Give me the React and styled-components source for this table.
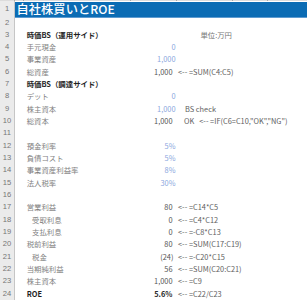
import React from "react";
import styled, { createGlobalStyle } from "styled-components";

const Global = createGlobalStyle`
  html, body { margin: 0; padding: 0; background: #fff; overflow: hidden; }
  body { font-family: "Noto Sans CJK JP", "Noto Sans", sans-serif; }
`;

const COLS = "15px 9px 107px 46px 56px 35px 1fr";
const ROW_H = 12.33;

const Sheet = styled.div`
  width: 307px;
  height: 300px;
  display: flex;
  flex-direction: column;
  overflow: hidden;
  font-size: 7.4px;
  color: #7f7f7f;
`;

const HeaderEdge = styled.div`
  display: grid;
  grid-template-columns: ${COLS};
  height: 1px;
  background: #dcdcdc;
`;

const EdgeCell = styled.div`
  border-right: 1px solid #a9a9a9;
  &:last-child { border-right: none; }
`;

const Row = styled.div`
  display: grid;
  grid-template-columns: ${COLS};
  height: ${(p) => p.$h}px;
  line-height: ${(p) => p.$h}px;
  white-space: nowrap;
`;

const RowHead = styled.div`
  background: #ebebeb;
  color: #767676;
  font-family: "Liberation Sans", sans-serif;
  font-size: 7.6px;
  text-align: center;
  border-right: 1px solid #c6c6c6;
  border-bottom: 1px solid #f7f7f7;
  box-sizing: border-box;
`;

const Title = styled.div`
  grid-column: 2 / -1;
  background: #0b6cb4;
  border-bottom: 1px solid #5e9bd0;
  margin-top: 0.7px;
  box-sizing: border-box;
  color: #fff;
  font-size: 12.2px;
  font-weight: 500;
  line-height: 14px;
  padding-left: 1.5px;
  letter-spacing: 0.1px;
`;

const Label = styled.div`
  grid-column: 3;
  padding-left: ${(p) => (p.$indent ? 8 : 2.7)}px;
  color: ${(p) => (p.$bold ? "#1f1f1f" : "#7f7f7f")};
  font-weight: ${(p) => (p.$bold ? 700 : 400)};
  overflow: visible;
`;

const Value = styled.div`
  grid-column: 4;
  text-align: right;
  padding-right: ${(p) => (p.$input ? 1.5 : 4.5)}px;
  color: ${(p) => (p.$input ? "#8ba7de" : "#555")};
  font-weight: ${(p) => (p.$bold ? 700 : 400)};
  ${(p) => (p.$bold ? "color: #2a2a2a;" : "")}
  ${(p) => (p.$paren ? "padding-right: 3.6px;" : "")}
`;

const Note = styled.div`
  grid-column: 5 / -1;
  padding-left: ${(p) => p.$pad ?? 1}px;
  color: #5e5e5e;
  word-spacing: ${(p) => p.$ws ?? 0}px;
`;

const Unit = styled.div`
  grid-column: 5;
  text-align: right;
  padding-right: 1px;
  color: #777;
`;

const rows = [
  {},
  { label: "時価BS（運用サイド）", bold: true, unit: "単位:万円" },
  { label: "手元現金", value: "0", input: true },
  { label: "事業資産", value: "1,000", input: true },
  { label: "総資産", value: "1,000", note: "<-- =SUM(C4:C5)" },
  { label: "時価BS（調達サイド）", bold: true },
  { label: "デット", value: "0", input: true },
  { label: "株主資本", value: "1,000", input: true, note: "BS check", pad: 8 },
  { label: "総資本", value: "1,000", note: "OK\u00a0\u00a0\u00a0<-- =IF(C6=C10,\"OK\",\"NG\")", pad: 7 },
  {},
  { label: "預金利率", value: "5%", input: true },
  { label: "負債コスト", value: "5%", input: true },
  { label: "事業資産利益率", value: "8%", input: true },
  { label: "法人税率", value: "30%", input: true },
  {},
  { label: "営業利益", value: "80", note: "<-- =C14*C5" },
  { label: "受取利息", indent: true, value: "0", note: "<-- =C4*C12" },
  { label: "支払利息", indent: true, value: "0", note: "<-- =-C8*C13" },
  { label: "税前利益", value: "80", note: "<-- =SUM(C17:C19)" },
  { label: "税金", indent: true, value: "(24)", paren: true, note: "<-- =-C20*C15" },
  { label: "当期純利益", value: "56", note: "<-- =SUM(C20:C21)" },
  { label: "株主資本", value: "1,000", note: "<-- =C9" },
  { label: "ROE", value: "5.6%", bold: true, note: "<-- =C22/C23" },
];

export default function App() {
  return (
    <>
      <Global />
      <Sheet>
        <HeaderEdge>
          {Array.from({ length: 7 }).map((_, i) => (
            <EdgeCell key={i} />
          ))}
        </HeaderEdge>
        <Row $h={15.5}>
          <RowHead>1</RowHead>
          <Title>自社株買いとROE</Title>
        </Row>
        {rows.map((r, i) => (
          <Row key={i} $h={ROW_H}>
            <RowHead>{i + 2}</RowHead>
            {r.label && (
              <Label $bold={r.bold} $indent={r.indent}>
                {r.label}
              </Label>
            )}
            {r.value && (
              <Value $input={r.input} $bold={r.bold} $paren={r.paren}>
                {r.value}
              </Value>
            )}
            {r.unit && <Unit>{r.unit}</Unit>}
            {r.note && <Note $pad={r.pad}>{r.note}</Note>}
          </Row>
        ))}
      </Sheet>
    </>
  );
}
